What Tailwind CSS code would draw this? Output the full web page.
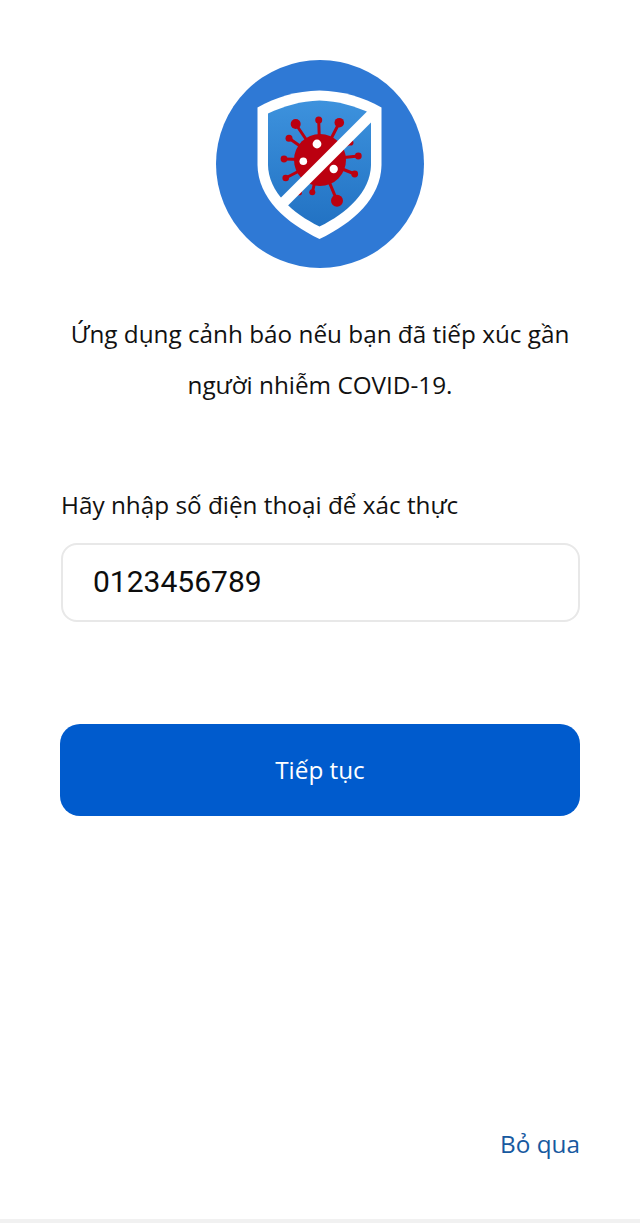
<!DOCTYPE html>
<html lang="vi">
<head>
  <meta charset="UTF-8">
  <title>Xác thực</title>
  <script src="https://cdn.jsdelivr.net/npm/@tailwindcss/browser@4"></script>
</head>
<body class="bg-white font-['Open_Sans','Noto_Sans',sans-serif] text-[#111111]">
  <div class="h-[1223px] flex flex-col overflow-hidden">
    <div class="flex-1 flex flex-col px-[60px] pt-[60px]">

      <!-- Logo -->
      <svg class="w-[208px] h-[208px] self-center shrink-0" viewBox="0 0 208 208">
        <defs>
          <linearGradient id="shieldFill" x1="0" y1="0" x2="0" y2="1">
            <stop offset="0" stop-color="#3d92dd"/>
            <stop offset="1" stop-color="#2272c3"/>
          </linearGradient>
        </defs>
        <circle cx="104" cy="104" r="104" fill="#2f79d5"/>
        <path d="M103.5 30.5C80 31 60 37 41.5 47.5V105C42 138 70 163 103.5 179C137 163 165 138 165.5 105V47.5C147 37 127 31 103.5 30.5Z" fill="#fff"/>
        <path d="M103.5 40.5C85 41 68 46 52 53.5V105C52.5 132 76 153 103.5 166.5C131 153 154.5 132 155 105V53.5C139 46 122 41 103.5 40.5Z" fill="url(#shieldFill)"/>
        <g stroke="#bb0010" stroke-width="3" stroke-linecap="round" fill="#bb0010">
          <path d="M104 100L79.7 64M104 100L102.7 60M104 100L123.3 62.7M104 100L73 78.3M104 100L68 99M104 100L69.7 118M104 100L83.3 132.7M104 100L96.3 132.3M104 100L121 140.7M104 100L138.7 114M104 100L142.3 96M104 100L134.7 82.7"/>
          <g stroke="none">
            <circle cx="79.7" cy="64" r="5"/>
            <circle cx="102.7" cy="60" r="3.5"/>
            <circle cx="123.3" cy="62.7" r="4.8"/>
            <circle cx="73" cy="78.3" r="3.5"/>
            <circle cx="68" cy="99" r="3.4"/>
            <circle cx="69.7" cy="118" r="3.3"/>
            <circle cx="83.3" cy="132.7" r="2.6"/>
            <circle cx="96.3" cy="132.3" r="3"/>
            <circle cx="121" cy="140.7" r="6"/>
            <circle cx="138.7" cy="114" r="3.4"/>
            <circle cx="142.3" cy="96" r="3.4"/>
            <circle cx="134.7" cy="82.7" r="2.8"/>
            <circle cx="104" cy="100" r="26"/>
          </g>
        </g>
        <circle cx="101" cy="84" r="4.4" fill="#fff"/>
        <circle cx="87.3" cy="101.3" r="3.8" fill="#fff"/>
        <circle cx="117.7" cy="109" r="4.2" fill="#fff"/>
        <path d="M156 54L67 143" stroke="#fff" stroke-width="10.6"/>
      </svg>

      <!-- Intro -->
      <p class="mt-[40px] -mx-5 text-center text-[24.3px] leading-[51px]">Ứng dụng cảnh báo nếu bạn đã tiếp xúc gần<br>người nhiễm COVID-19.</p>

      <!-- Phone -->
      <label class="mt-[79px] ml-px text-[24.3px] leading-[32px]">Hãy nhập số điện thoại để xác thực</label>
      <div class="mt-[22px] ml-px h-[79px] border-2 border-[#e8e8e8] rounded-[16px] pl-[30px] pb-[3px] flex items-center font-['Roboto',sans-serif] text-[30px] text-[#0d0d0d]">0123456789</div>

      <button class="mt-[102px] h-[92px] rounded-[20px] bg-[#005bcd] text-white text-[24.3px]">Tiếp tục</button>

      <div class="mt-auto mb-[59px] text-right text-[24.3px] leading-[32px] text-[#17599f]">Bỏ qua</div>
    </div>
    <div class="h-[4px] bg-[#f1f1f1]"></div>
  </div>
</body>
</html>
